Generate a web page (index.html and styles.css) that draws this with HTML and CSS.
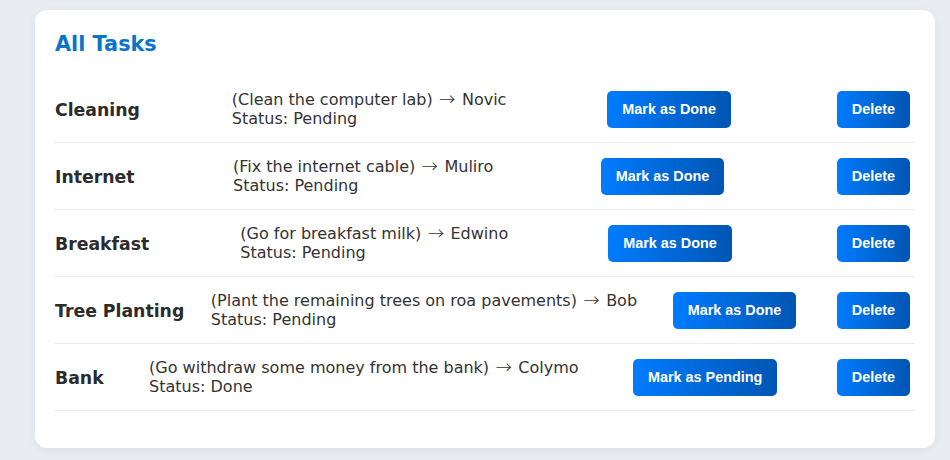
FILE: index.html
```html
<!DOCTYPE html>
<html lang="en">
<head>
<meta charset="utf-8">
<title>All Tasks</title>
<link rel="stylesheet" href="styles.css">
</head>
<body>
<div class="card">
  <h2 class="heading">All Tasks</h2>
  <ul class="tasks">
    <li class="task">
      <span class="task-title">Cleaning</span>
      <span class="task-desc">(Clean the computer lab) <span class="arrow">→</span> Novic<br>Status: Pending</span>
      <button class="btn">Mark as Done</button>
      <button class="btn">Delete</button>
    </li>
    <li class="task">
      <span class="task-title">Internet</span>
      <span class="task-desc">(Fix the internet cable) <span class="arrow">→</span> Muliro<br>Status: Pending</span>
      <button class="btn">Mark as Done</button>
      <button class="btn">Delete</button>
    </li>
    <li class="task">
      <span class="task-title">Breakfast</span>
      <span class="task-desc">(Go for breakfast milk) <span class="arrow">→</span> Edwino<br>Status: Pending</span>
      <button class="btn">Mark as Done</button>
      <button class="btn">Delete</button>
    </li>
    <li class="task">
      <span class="task-title">Tree Planting</span>
      <span class="task-desc">(Plant the remaining trees on roa pavements) <span class="arrow">→</span> Bob<br>Status: Pending</span>
      <button class="btn">Mark as Done</button>
      <button class="btn">Delete</button>
    </li>
    <li class="task">
      <span class="task-title">Bank</span>
      <span class="task-desc">(Go withdraw some money from the bank) <span class="arrow">→</span> Colymo<br>Status: Done</span>
      <button class="btn">Mark as Pending</button>
      <button class="btn">Delete</button>
    </li>
  </ul>
</div>
</body>
</html>
```

FILE: styles.css
```css
html, body {
  margin: 0;
  padding: 0;
}
body {
  background: #e9edf2;
  font-family: "DejaVu Sans", Verdana, sans-serif;
  padding: 10px 15px 0 35px;
  height: 460px;
  box-sizing: border-box;
}
.card {
  background: #ffffff;
  border-radius: 12px;
  box-shadow: 0 2px 8px rgba(0, 0, 0, 0.06);
  padding: 20px 20px 37px 20px;
}
.heading {
  margin: 2px 0 20px 0;
  font-size: 20.8px;
  font-weight: bold;
  color: #0a74c9;
  line-height: 24px;
}
.tasks {
  list-style: none;
  margin: 0;
  padding: 0;
}
.task {
  display: flex;
  justify-content: space-between;
  align-items: center;
  padding: 15px 0 14px 0;
  border-bottom: 1px solid #ececec;
}
.task-title {
  font-weight: bold;
  font-size: 17.3px;
  color: #2b2b2b;
}
.task-desc {
  font-size: 16px;
  color: #333333;
  line-height: 18.5px;
}
.arrow {
  font-family: "Noto Sans CJK JP", "DejaVu Sans", sans-serif;
  font-weight: 300;
  line-height: 0;
  margin: 0 1.5px;
}
.btn {
  font-family: "Liberation Sans", Arial, sans-serif;
  font-weight: bold;
  font-size: 14.4px;
  line-height: 16.5px;
  color: #ffffff;
  background: linear-gradient(90deg, #007bff, #0056b3);
  border: none;
  border-radius: 5px;
  padding: 10px 15px;
  margin: 0 5px 0 9px;
  cursor: pointer;
}
```
